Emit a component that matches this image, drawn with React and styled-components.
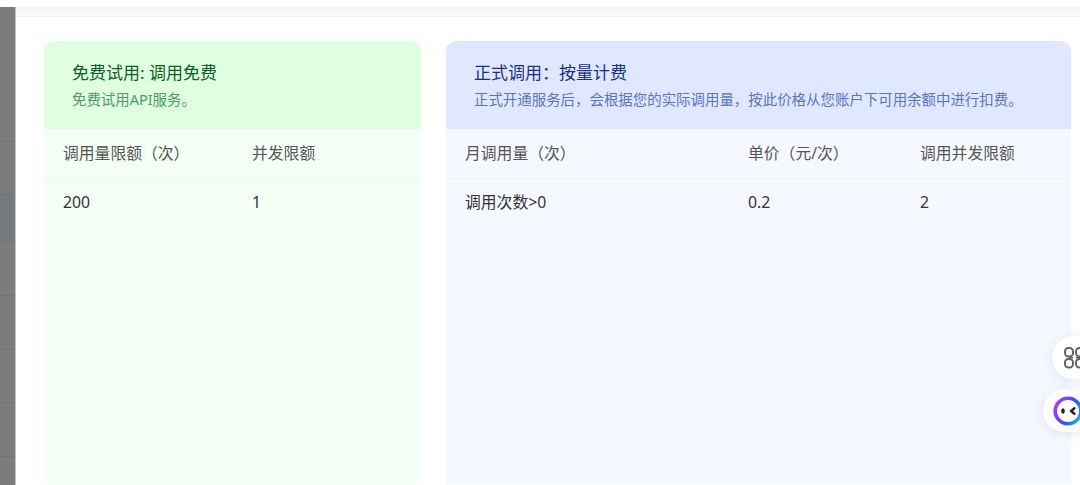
import React from "react";
import styled, { createGlobalStyle } from "styled-components";

const Global = createGlobalStyle`
  html, body {
    margin: 0;
    height: 100%;
    overflow: hidden;
    background: #fff;
    font-family: "Noto Sans", "Noto Sans CJK SC", sans-serif;
  }
`;

const Page = styled.div`
  position: relative;
  width: 1080px;
  height: 485px;
  padding-top: 7px;
  box-sizing: border-box;
  display: flex;
  overflow: hidden;
`;

const Sidebar = styled.div`
  width: 15px;
  flex: none;
  background: #7c7c7c;
  border-right: 1px solid #c4c4c4;
  display: flex;
  flex-direction: column;
`;

const SideRow = styled.div`
  height: ${(props) => props.h}px;
  flex: none;
  box-sizing: border-box;
  background: ${(props) => (props.active ? "#777a7d" : "transparent")};
  border-bottom: 1px solid #747474;
`;

const Main = styled.div`
  flex: 1;
  min-width: 0;
  display: flex;
  flex-direction: column;
`;

const TopStrip = styled.div`
  height: 10px;
  flex: none;
  box-sizing: border-box;
  background: linear-gradient(#f3f3f3, #fbfbfb);
  border-bottom: 1px solid #f0f0f0;
`;

const Content = styled.div`
  flex: 1;
  padding: 24px 9px 1px 28px;
  display: grid;
  grid-template-columns: 377px 625px;
  gap: 25px;
  min-height: 0;
`;

const Card = styled.div`
  border-radius: 10px 10px 0 0;
  overflow: hidden;
  background: ${(props) => props.bg};
  display: flex;
  flex-direction: column;
`;

const CardHead = styled.div`
  height: 88px;
  flex: none;
  box-sizing: border-box;
  padding: 20px ${(props) => props.pad}px;
  background: ${(props) => props.bg};
`;

const Title = styled.div`
  font-size: 17px;
  line-height: 24px;
  font-weight: 400;
  color: ${(props) => props.color};
`;

const Sub = styled.div`
  margin-top: 5px;
  font-size: 14.45px;
  line-height: 20px;
  white-space: nowrap;
  color: ${(props) => props.color};
`;

const Row = styled.div`
  height: ${(props) => props.h}px;
  flex: none;
  box-sizing: border-box;
  display: grid;
  grid-template-columns: ${(props) => props.cols};
  align-items: center;
  padding: 0 0 ${(props) => props.lift}px 19px;
  font-size: 15.8px;
  color: ${(props) => props.color};
  border-bottom: ${(props) => (props.line ? `1px solid ${props.line}` : "none")};
`;

const Floating = styled.div`
  position: absolute;
  top: ${(props) => props.top}px;
  left: ${(props) => props.left}px;
  width: 100px;
  height: 43px;
  border-radius: 22px;
  background: #fff;
  box-shadow: 0 2px 12px rgba(60, 70, 110, 0.12);
  display: flex;
  align-items: center;
  padding-left: ${(props) => props.pad}px;
  box-sizing: border-box;
`;

const sideRows = [[135], [53], [48, true], [53], [54], [53], [54], [30]];

function CommandIcon() {
  return (
    <svg width="24" height="22" viewBox="0 0 24 22" fill="none" stroke="#636363" strokeWidth="2">
      <rect x="1" y="1" width="8" height="8.5" rx="3.5" />
      <rect x="1" y="12" width="8" height="8.5" rx="3.5" />
      <rect x="12" y="1" width="8" height="8.5" rx="3.5" />
      <rect x="12" y="12" width="8" height="8.5" rx="3.5" />
      <path d="M5 10.7h4M12 10.7h4" strokeWidth="1.4" />
    </svg>
  );
}

function Logo() {
  return (
    <svg width="30" height="30" viewBox="0 0 30 30">
      <defs>
        <linearGradient id="ring" x1="1" y1="1" x2="0" y2="0.5">
          <stop offset="0" stopColor="#18c8e8" />
          <stop offset="0.5" stopColor="#2a55f0" />
          <stop offset="1" stopColor="#a03cf0" />
        </linearGradient>
      </defs>
      <circle cx="15" cy="15" r="12.8" fill="#fff" stroke="url(#ring)" strokeWidth="3.6" />
      <ellipse cx="10" cy="15" rx="1.8" ry="2.8" fill="#222" />
      <path d="M21.4 12.2 L18 15 L21.4 17.8" fill="none" stroke="#222" strokeWidth="2.4" strokeLinecap="round" strokeLinejoin="round" />
    </svg>
  );
}

export default function App() {
  return (
    <Page>
      <Global />
      <Sidebar>
        {sideRows.map(([h, active], i) => (
          <SideRow key={i} h={h} active={active} />
        ))}
      </Sidebar>
      <Main>
        <TopStrip />
        <Content>
          <Card bg="#f4fff5">
            <CardHead bg="#dfffdf" pad={28}>
              <Title color="#0f5c2c">免费试用: 调用免费</Title>
              <Sub color="#4c9a6a">免费试用API服务。</Sub>
            </CardHead>
            <Row h={50} lift={2} cols="189px 1fr" color="#555" line="#eef6ef">
              <span>调用量限额（次）</span>
              <span>并发限额</span>
            </Row>
            <Row h={47} lift={2} cols="189px 1fr" color="#333">
              <span>200</span>
              <span>1</span>
            </Row>
          </Card>
          <Card bg="#f5f8ff">
            <CardHead bg="#e0e8ff" pad={28}>
              <Title color="#1a2f86">正式调用：按量计费</Title>
              <Sub color="#5a74c0">正式开通服务后，会根据您的实际调用量，按此价格从您账户下可用余额中进行扣费。</Sub>
            </CardHead>
            <Row h={50} lift={2} cols="283px 172px 1fr" color="#555" line="#eef1f9">
              <span>月调用量（次）</span>
              <span>单价（元/次）</span>
              <span>调用并发限额</span>
            </Row>
            <Row h={47} lift={2} cols="283px 172px 1fr" color="#333">
              <span>调用次数&gt;0</span>
              <span>0.2</span>
              <span>2</span>
            </Row>
          </Card>
        </Content>
      </Main>
      <Floating top={336} left={1052} pad={12}>
        <CommandIcon />
      </Floating>
      <Floating top={389} left={1043} pad={10}>
        <Logo />
      </Floating>
    </Page>
  );
}
